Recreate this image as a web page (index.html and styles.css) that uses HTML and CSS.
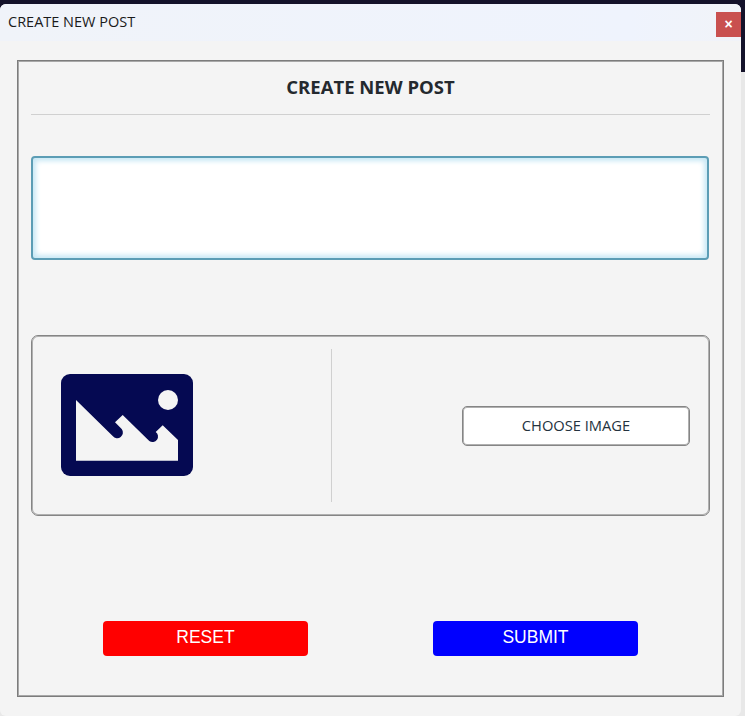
FILE: index.html
```html
<!DOCTYPE html>
<html>
<head>
    <meta charset="utf-8">
    <title>CREATE NEW POST</title>
    <link rel="stylesheet" href="styles.css">
</head>
<body>
	<div class="window">
		<div class="titlebar">
			<span class="titlebar-text">CREATE NEW POST</span>
			<button class="close-btn" type="button">×</button>
		</div>
		<div class="panel">
			<h1 class="panel-title">CREATE NEW POST</h1>
			<textarea class="post-text"></textarea>
			<div class="image-box">
				<div class="image-preview">
					<svg class="image-icon" width="132" height="102" viewBox="0 0 132 102">
						<rect width="132" height="102" rx="9" fill="#050952"/>
						<circle cx="107" cy="26" r="10" fill="#f4f4f4"/>
						<path fill="#f4f4f4" d="M15 26 L51.7 62 A4.9 4.9 0 0 0 60.7 55 L54 48.3 L61.7 41 L88.3 67 A4.9 4.9 0 0 0 94.7 58 L101.7 51.3 L117 66 L117 86.7 L15 86.7 Z"/>
					</svg>
				</div>
				<div class="image-action">
					<button class="choose-btn" type="button">CHOOSE IMAGE</button>
				</div>
			</div>
			<div class="actions">
				<button class="action-btn reset" type="button">RESET</button>
				<button class="action-btn submit" type="button">SUBMIT</button>
			</div>
		</div>
	</div>
</body>
</html>
```

FILE: styles.css
```css
html, body { height: 100%; }
body { margin: 0; overflow: hidden; background: linear-gradient(#14122a 72px, #e8e8e8 72px); font-family: "Open Sans", "Noto Sans", sans-serif; }
.window { box-sizing: border-box; width: 741px; height: 712px; margin-top: 4px; background: #f4f4f4; border-radius: 6px; overflow: hidden; }
.titlebar { display: flex; align-items: flex-start; justify-content: space-between; height: 37px; background: linear-gradient(90deg, #f0f3f9, #eff3fd 85%, #f1f3f8); }
.titlebar-text { margin: 8px 0 0 8px; font-size: 14.5px; line-height: 20px; color: #1a1a1a; }
.close-btn { width: 25px; height: 25px; margin-top: 8px; padding: 0; border: none; background: #c9504f; color: #fff; font-family: "Liberation Sans", sans-serif; font-size: 14px; font-weight: bold; line-height: 25px; }
.panel { box-sizing: border-box; width: 707px; height: 637px; margin: 19px 0 0 17px; padding: 1px 13px; border: 1px solid #7c7c7c; box-shadow: inset 0 0 0 1px #a8a8a8; }
.panel-title { box-sizing: border-box; height: 53px; margin: 0 0 41px; padding-top: 12px; border-bottom: 1px solid #d0d0d0; text-align: center; font-size: 18.5px; line-height: 26px; font-weight: 700; color: #24292e; }
.post-text { display: block; box-sizing: border-box; width: 678px; height: 104px; margin: 0 0 75px; padding: 6px; border: 2px solid #5c9db5; border-radius: 4px; background: #fff; box-shadow: inset 0 0 5px 3px #c8e8f5; outline: none; resize: none; }
.image-box { box-sizing: border-box; display: flex; height: 181px; margin-bottom: 105px; border: 1px solid #858585; border-radius: 7px; padding: 13px 1px; box-shadow: inset 0 0 0 1px #b0b0b0; }
.image-preview { display: flex; align-items: flex-start; width: 298.5px; height: 153px; padding: 25px 0 0 28px; box-sizing: border-box; border-right: 1px solid #d0d0d0; }
.image-icon { display: block; }
.image-action { flex: 1; display: flex; align-items: center; justify-content: flex-end; padding-right: 18px; }
.choose-btn { box-sizing: border-box; width: 228px; height: 40px; padding: 0 0 2px; border: 1px solid #858585; border-radius: 5px; background: #fff; box-shadow: inset 0 0 0 1px #b0b0b0; color: #24323e; font-family: "Open Sans", "Noto Sans", sans-serif; font-size: 14.7px; }
.actions { display: flex; justify-content: center; gap: 125px; }
.action-btn { width: 205px; height: 35px; padding: 0 0 3px; border: none; border-radius: 4px; color: #fff; font-family: "Liberation Sans", sans-serif; font-size: 17.5px; }
.reset { background: #ff0000; }
.submit { background: #0000ff; }
```
